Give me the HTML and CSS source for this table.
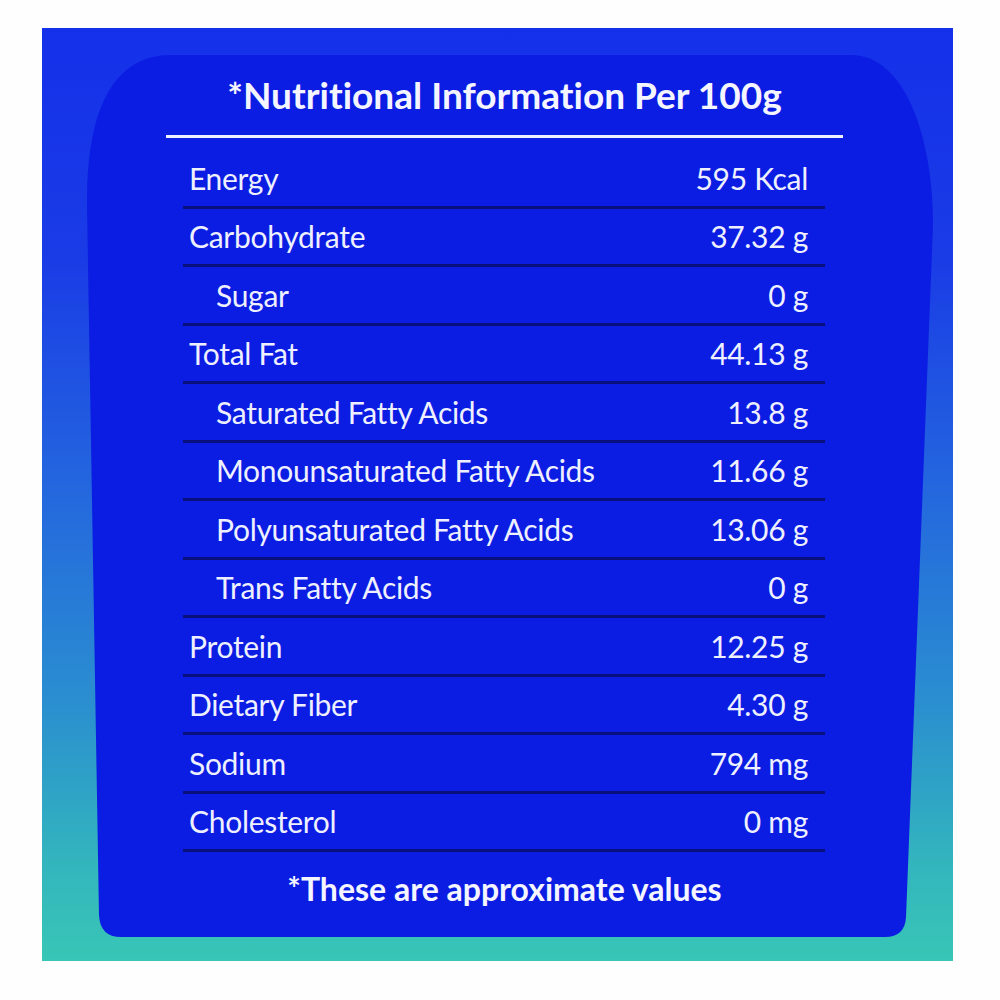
FILE: index.html
```html
<!DOCTYPE html>
<html lang="en">
<head>
<meta charset="utf-8">
<title>Nutritional Information</title>
<link rel="stylesheet" href="styles.css">
</head>
<body>
<div class="frame">
  <div class="panel">
    <div class="content">
      <h1 class="title">*Nutritional Information Per 100g</h1>
      <div class="rule"></div>
      <div class="table">
        <div class="row"><span>Energy</span><span>595 Kcal</span></div>
        <div class="row"><span>Carbohydrate</span><span>37.32 g</span></div>
        <div class="row sub"><span>Sugar</span><span>0 g</span></div>
        <div class="row"><span>Total Fat</span><span>44.13 g</span></div>
        <div class="row sub"><span>Saturated Fatty Acids</span><span>13.8 g</span></div>
        <div class="row sub"><span>Monounsaturated Fatty Acids</span><span>11.66 g</span></div>
        <div class="row sub"><span>Polyunsaturated Fatty Acids</span><span>13.06 g</span></div>
        <div class="row sub"><span>Trans Fatty Acids</span><span>0 g</span></div>
        <div class="row"><span>Protein</span><span>12.25 g</span></div>
        <div class="row"><span>Dietary Fiber</span><span>4.30 g</span></div>
        <div class="row"><span>Sodium</span><span>794 mg</span></div>
        <div class="row"><span>Cholesterol</span><span>0 mg</span></div>
      </div>
      <p class="note">*These are approximate values</p>
    </div>
  </div>
</div>
</body>
</html>
```

FILE: styles.css
```css
html, body {
  margin: 0;
  padding: 0;
  background: #fefefe;
}

.frame {
  margin: 28px 0 0 42px;
  width: 911px;
  height: 933px;
  padding-top: 27px;
  box-sizing: border-box;
  background: linear-gradient(180deg, #1530ea 0%, #1a3ce6 25%, #2468de 50%, #2a8ed0 72%, #33b6bd 90%, #38c6b6 100%);
}

.panel {
  position: relative;
  margin-left: 44px;
  width: 850px;
  height: 882px;
  padding-left: 80px;
  box-sizing: border-box;
}

.panel::before {
  content: "";
  position: absolute;
  inset: 0;
  background: #0b1de2;
  clip-path: path('M 85 0 L 765 0 C 818 0 847 80 847 170 L 820 862 Q 819 882 799 882 L 35 882 Q 14 882 13 860 L 1 150 C 0 50 30 0 85 0 Z');
}

.content {
  position: relative;
  width: 677px;
  padding-top: 18px;
  display: flex;
  flex-direction: column;
  color: #eef0ff;
  font-family: Lato, "Open Sans", sans-serif;
  font-variant-ligatures: none;
}

.title {
  margin: 0;
  font-size: 37px;
  line-height: 44px;
  font-weight: 700;
  text-align: center;
  color: #f4f5ff;
}

.rule {
  margin-top: 18px;
  height: 3px;
  background: #eef0ff;
}

.table {
  margin: 12px 0 0 17px;
  width: 642px;
}

.row {
  display: flex;
  justify-content: space-between;
  align-items: center;
  height: 58.5px;
  box-sizing: border-box;
  border-bottom: 3px solid #08107e;
  padding: 0 17px 0 6px;
  font-size: 30px;
  letter-spacing: -0.3px;
}

.row.sub {
  padding-left: 33px;
}

.note {
  margin: 17px 0 0;
  font-size: 32px;
  line-height: 40px;
  font-weight: 700;
  text-align: center;
  color: #f4f5ff;
}
```
